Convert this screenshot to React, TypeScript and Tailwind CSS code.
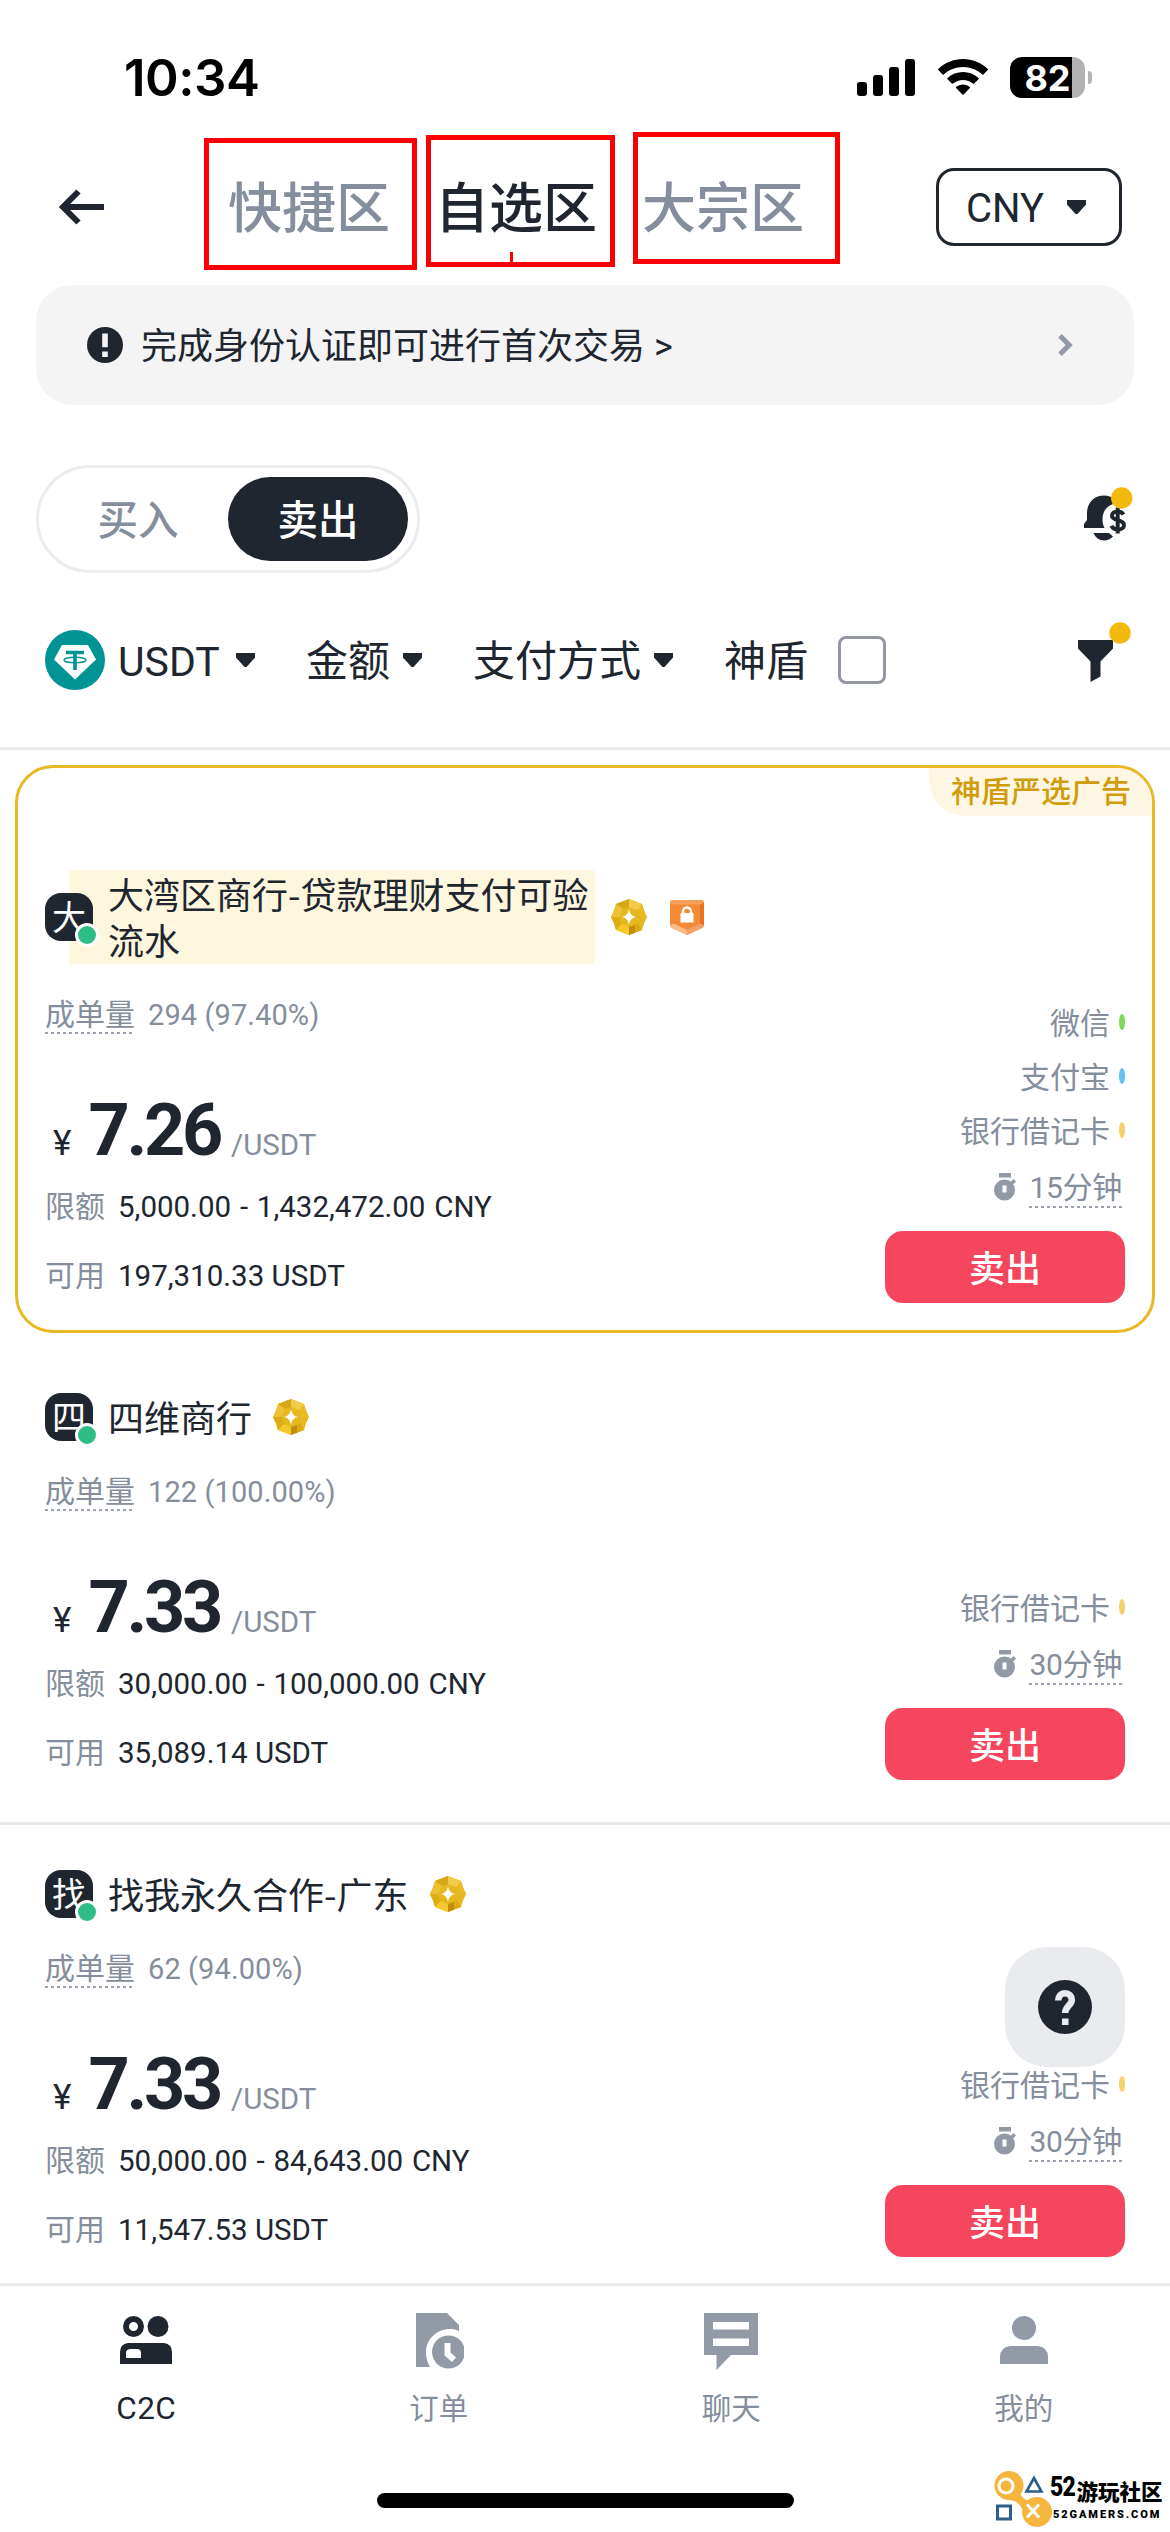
import type { ReactNode } from "react";

type Method = { name: string; color: string };

type Ad = {
  initial: string;
  name: string;
  orders: string;
  price: string;
  limit: string;
  available: string;
  minutes: string;
  methods: Method[];
  shield?: boolean;
};

const WECHAT: Method = { name: "微信", color: "bg-[#7ed957]" };
const ALIPAY: Method = { name: "支付宝", color: "bg-[#63c3f2]" };
const BANK: Method = { name: "银行借记卡", color: "bg-[#f5d16e]" };

const ads: Ad[] = [
  {
    initial: "大",
    name: "大湾区商行-贷款理财支付可验流水",
    orders: "294 (97.40%)",
    price: "7.26",
    limit: "5,000.00 - 1,432,472.00 CNY",
    available: "197,310.33 USDT",
    minutes: "15分钟",
    methods: [WECHAT, ALIPAY, BANK],
    shield: true,
  },
  {
    initial: "四",
    name: "四维商行",
    orders: "122 (100.00%)",
    price: "7.33",
    limit: "30,000.00 - 100,000.00 CNY",
    available: "35,089.14 USDT",
    minutes: "30分钟",
    methods: [BANK],
  },
  {
    initial: "找",
    name: "找我永久合作-广东",
    orders: "62 (94.00%)",
    price: "7.33",
    limit: "50,000.00 - 84,643.00 CNY",
    available: "11,547.53 USDT",
    minutes: "30分钟",
    methods: [BANK],
  },
];

function Caret({ className = "" }: { className?: string }) {
  return (
    <svg viewBox="0 0 19 14" className={`h-[14px] w-[19px] shrink-0 ${className}`} fill="#202630">
      <path d="M0 0h19v4.500L10.500 14h-2L0 4.500z" />
    </svg>
  );
}

function StatusBar() {
  return (
    <div className="flex h-[138px] items-start justify-between pl-[124px] pr-[78px]">
      <span className="mt-[47px] font-['Inter'] text-[51px] font-semibold leading-[62px] tracking-[-0.500px] text-black">
        10:34
      </span>
      <div className="mt-[57px] flex h-[41px] items-center">
        <svg viewBox="0 0 58 37" className="h-[37px] w-[58px]">
          <rect x="0" y="23" width="10" height="14" rx="3" />
          <rect x="16" y="16" width="10" height="21" rx="3" />
          <rect x="32" y="8" width="10" height="29" rx="3" />
          <rect x="48" y="0" width="10" height="37" rx="3" />
        </svg>
        <svg viewBox="0 0 50 37" className="ml-[23px] h-[37px] w-[50px]">
          <path d="M25 0C15.500 0 6.700 3.800 0.300 9.900a.8.800 0 0 0 0 1.200l4.300 4.300a.8.800 0 0 0 1.200 0C10.900 10.700 17.600 7.900 25 7.900s14.100 2.800 19.200 7.500a.8.800 0 0 0 1.200 0l4.300-4.300a.8.800 0 0 0 0-1.200C43.300 3.800 34.500 0 25 0z" />
          <path d="M25 13c-6 0-11.400 2.300-15.500 6a.9.900 0 0 0 0 1.300l4.300 4.300a.9.900 0 0 0 1.200 0c2.700-2.300 6.200-3.700 10-3.700s7.300 1.400 10 3.700a.9.900 0 0 0 1.200 0l4.300-4.300a.9.900 0 0 0 0-1.300C36.400 15.300 31 13 25 13z" />
          <path d="M25 25.500c-2.600 0-5 .9-6.900 2.400a.8.800 0 0 0 0 1.200l6.300 6.400a.8.800 0 0 0 1.200 0l6.300-6.400a.8.800 0 0 0 0-1.200c-1.900-1.500-4.300-2.400-6.900-2.400z" />
        </svg>
        <div className="ml-[22px] flex h-[41px] w-[75px] items-center justify-center rounded-[12px] bg-[linear-gradient(to_right,#000_62px,#b3b3b3_62px)]">
          <span className="font-['Inter'] text-[36px] font-bold leading-[44px] text-white">82</span>
        </div>
        <div className="ml-[3px] h-[13px] w-[4px] rounded-r-full bg-[#b3b3b3]" />
      </div>
    </div>
  );
}

function MarkBox({ className }: { className: string }) {
  return <div className={`absolute border-[5px] border-[#fb0000] ${className}`} />;
}

function Header() {
  return (
    <div className="relative h-[147px]">
      <div className="flex h-[138px] items-center pl-[59px] pr-12">
        <svg viewBox="0 0 45 36" className="h-[36px] w-[45px] shrink-0" fill="none" stroke="#202630" strokeWidth="6">
          <path d="M45 18H4M19.500 2.500L4 18l15.500 15.500" />
        </svg>
        <div className="ml-[124px] flex gap-[45px] pt-[6px] text-[54px] font-medium leading-[66px] text-[#848e9c]">
          <span>快捷区</span>
          <span className="text-[#202630]">自选区</span>
          <span>大宗区</span>
        </div>
        <div className="ml-auto flex h-[78px] w-[186px] items-center rounded-[18px] border-[3px] border-[#202630] pl-[27px]">
          <span className="pt-[3px] text-[40px] leading-[48px]">CNY</span>
          <Caret className="ml-[23px]" />
        </div>
      </div>
      <MarkBox className="left-[204px] top-0 h-[132px] w-[213px]" />
      <MarkBox className="left-[426px] top-[-3px] h-[132px] w-[189px]" />
      <MarkBox className="left-[633px] top-[-6px] h-[132px] w-[207px]" />
      <div className="absolute left-[510px] top-[114px] h-[11px] w-[3px] bg-[#fb0000]" />
    </div>
  );
}

function Banner() {
  return (
    <div className="mx-9 flex h-[120px] items-center rounded-[36px] bg-[#f4f4f4] pl-[51px] pr-[61px]">
      <svg viewBox="0 0 36 36" className="h-9 w-9">
        <circle cx="18" cy="18" r="18" fill="#202630" />
        <path d="M15.200 6.500h5.600v13.800h-5.600zM15.200 24.500h5.600v5.500h-5.600z" fill="#f4f4f4" />
      </svg>
      <span className="ml-[18px] pt-[3px] text-[36px] leading-[48px]">完成身份认证即可进行首次交易 &gt;</span>
      <svg viewBox="0 0 15 22" className="ml-auto h-[22px] w-[15px]" fill="none" stroke="#929aa5" strokeWidth="5">
        <path d="M2 1.800L11.200 11 2 20.200" />
      </svg>
    </div>
  );
}

function TradeToggle() {
  return (
    <div className="mt-[60px] flex h-[108px] items-center justify-between pl-9 pr-[37px]">
      <div className="flex h-[108px] w-[384px] items-center rounded-full border-[3px] border-[#eaecef] p-[9px] text-[40.500px] font-medium leading-[48px]">
        <span className="flex-1 pt-[3px] text-center text-[#848e9c]">买入</span>
        <span className="flex h-[84px] w-[180px] items-center justify-center rounded-full bg-[#202630] pt-[3px] text-white">
          卖出
        </span>
      </div>
      <svg viewBox="0 0 50 54" className="mb-[10px] h-[54px] w-[50px]">
        <path d="M21 8.500C11 8.500 4 16 4 26v7l-3 4v4h20.500c-1.300-2.400-2-5.300-2-8.500 0-7.500 3.500-12.800 9.500-15l3.500-4.500C29.500 10 25.500 8.500 21 8.500z" fill="#202630" />
        <path d="M10.500 46H26l4 3.500c-2.300 2.600-5.500 4-9 4-4.800 0-8.800-3-10.500-7.500z" fill="#202630" />
        <path d="M40.500 27.500c-1.200-2-3.200-3-6-3-3.200 0-5.500 1.700-5.500 4.200 0 6 12 3 12 9.200 0 2.700-2.500 4.600-6 4.600-3.200 0-5.500-1.300-6.500-3.700M34.700 20.500v26" fill="none" stroke="#202630" strokeWidth="4" />
        <circle cx="38.700" cy="11" r="10.700" fill="#f0b90b" />
      </svg>
    </div>
  );
}

function Filters() {
  return (
    <div className="flex h-[177px] items-start border-b-[3px] border-[#eaeaea] pl-[45px] pr-[39px] pt-[49px]">
      <div className="flex h-[76px] w-full items-center text-[42px] leading-[60px]">
        <svg viewBox="0 0 60 60" className="h-[60px] w-[60px] shrink-0">
          <circle cx="30" cy="30" r="30" fill="#009393" />
          <path d="M17 15h26l8 14.500L30 49.500 9 29.500z" fill="#fff" />
          <path d="M21 22.500h18M30 22.500V40" stroke="#009393" strokeWidth="3.600" fill="none" />
          <ellipse cx="30" cy="30" rx="11" ry="2.800" fill="none" stroke="#009393" strokeWidth="1.400" />
        </svg>
        <span className="ml-[13px] w-[101px] pt-1 text-[41px]">USDT</span>
        <Caret className="ml-[17px]" />
        <span className="ml-[51px] pt-1">金额</span>
        <Caret className="ml-[13px]" />
        <span className="ml-[51px] pt-1">支付方式</span>
        <Caret className="ml-[13px]" />
        <span className="ml-[51px] pt-1">神盾</span>
        <span className="ml-[30px] h-12 w-12 rounded-[8px] border-[3px] border-[#9397a2]" />
        <svg viewBox="0 0 54 60" className="ml-auto mb-[16px] h-[60px] w-[54px] shrink-0">
          <path d="M1 18h35v8.500L23.500 39.500v15L13.500 60V39.500L1 26.500z" fill="#202630" />
          <circle cx="43" cy="11" r="10.700" fill="#f0b90b" />
        </svg>
      </div>
    </div>
  );
}

function GoldBadge() {
  return (
    <svg viewBox="0 0 36 36" className="h-9 w-9 shrink-0">
      <path d="M18 0l6.500 2.500L31 5l2 6.500 3 6.500-3 6.500-2 6.500-6.500 2.500L18 36l-6.500-2.500L5 31l-2-6.500L0 18l3-6.500L5 5l6.500-2.500z" fill="#e6b820" />
      <path d="M5 5l6.500-2.500L18 0v8l-6 2z" fill="#d6a716" />
      <path d="M18 0l6.500 2.500L23 10l-5-2zM24.500 2.500L31 5l-4 6-4-1z" fill="#f2cc48" />
      <path d="M0 18l3-6.500L5 5l7 5-4 8z" fill="#ecc132" />
      <path d="M31 5l2 6.500 3 6.500h-7l-2-7z" fill="#e9bb22" />
      <path d="M5 31l-2-6.500L0 18h8l3 7z" fill="#ddad14" />
      <path d="M18 36l-6.500-2.500L5 31l6-6 7 3z" fill="#f5c92c" />
      <path d="M18 36v-8l6-2 .5 7.500z" fill="#c38f08" />
      <path d="M31 31l-6.500 2.500L24 26l3-2z" fill="#dca913" />
      <path d="M18 10c.8 5 3 7.300 7.500 8-4.500.7-6.700 3-7.500 8-.8-5-3-7.300-7.500-8 4.500-.7 6.700-3 7.500-8z" fill="#fff" />
    </svg>
  );
}

function ShieldBadge() {
  return (
    <svg viewBox="0 0 34 36" className="h-9 w-[34px] shrink-0">
      <path d="M3 1h28q3 0 3 3v22q0 2-2 3l-15 7-15-7q-2-1-2-3V4q0-3 3-3z" fill="#f58a36" />
      <path d="M3 1h28q3 0 3 3l-4 1.500H4L0 4q0-3 3-3z" fill="#f4a05a" />
      <path d="M0 26l4-1.500L17 31v5L2 29q-2-1-2-3z" fill="#fbb888" />
      <path d="M34 26l-4-1.500L17 31v5l15-7q2-1 2-3z" fill="#f3a068" />
      <path d="M34 4l-4 1.500v19l4 1.500z" fill="#e8731c" />
      <rect x="10.500" y="14" width="13" height="9.500" fill="#fff" />
      <path d="M13 14.500v-2a4 4 0 0 1 8 0v2" fill="none" stroke="#fff" strokeWidth="2.400" />
    </svg>
  );
}

function Stopwatch() {
  return (
    <svg viewBox="0 0 22 28" className="h-7 w-[22px] shrink-0" fill="#929aa5">
      <path d="M5 0h12v4.500H5zM16.500 9l3-3L22 8.500l-3 3z" />
      <path fillRule="evenodd" d="M10.500 6.500a10.500 10.500 0 1 1 0 21 10.500 10.500 0 0 1 0-21zM8.500 12.500v7h4v-7z" />
    </svg>
  );
}

function Dotted({ className = "" }: { className?: string }) {
  return (
    <span
      className={`h-[2px] bg-[repeating-linear-gradient(to_right,#9aa2ad_0_3px,transparent_3px_6px)] ${className}`}
    />
  );
}

function Row({ label, children }: { label: string; children: ReactNode }) {
  return (
    <div className="flex h-10 items-center text-[30px] leading-10">
      <span className="text-[#848e9c]">{label}</span>
      <span className="ml-[13px] text-[29.500px]">{children}</span>
    </div>
  );
}

function Details({ ad }: { ad: Ad }) {
  return (
    <div className="mt-[30px] flex h-[309px] justify-between">
      <div className="flex flex-col">
        <div className="flex h-10 text-[30px] leading-[42px] text-[#848e9c]">
          <span className="flex h-10 flex-col">
            <span className="h-[38px]">成单量</span>
            <Dotted />
          </span>
          <span className="ml-[13px] text-[29px] tracking-[0.100px]">{ad.orders}</span>
        </div>
        <div className="mt-[61px] flex h-[72px] items-baseline leading-[72px]">
          <span className="ml-[8px] text-[35px]">¥</span>
          <span className="ml-[17px] text-[72px] font-bold tracking-[-3.300px]">{ad.price}</span>
          <span className="ml-[11px] text-[29.500px] text-[#848e9c]">/USDT</span>
        </div>
        <div className="mt-[20px] flex flex-col gap-[29px]">
          <Row label="限额">
            <span className="[word-spacing:1.500px]">{ad.limit}</span>
          </Row>
          <Row label="可用">{ad.available}</Row>
        </div>
      </div>
      <div className="flex w-[240px] shrink-0 flex-col items-end justify-end text-[30px] text-[#848e9c]">
        {ad.methods.map((m) => (
          <div key={m.name} className="flex h-[54px] items-center gap-[9px]">
            <span className="pt-[3px] leading-[40px]">{m.name}</span>
            <span className={`h-[16px] w-[6px] rounded-[50%] ${m.color}`} />
          </div>
        ))}
        <div className="mr-[3px] mt-[9px] flex h-[42px] items-center">
          <Stopwatch />
          <span className="ml-[13px] flex flex-col">
            <span className="h-10 leading-[43px] tracking-[-0.300px]">{ad.minutes}</span>
            <Dotted />
          </span>
        </div>
        <button className="mt-[23px] flex h-[72px] w-full items-center justify-center rounded-[18px] bg-[#f6465d] pt-[5px] text-[36px] font-medium leading-[54px] text-white">
          卖出
        </button>
      </div>
    </div>
  );
}

function Avatar({ initial }: { initial: string }) {
  return (
    <div className="relative z-10 h-12 w-12 shrink-0">
      <div className="flex h-12 w-12 items-center justify-center rounded-[16px] bg-[#202630] pt-[2px] text-[34px] leading-[46px] text-white">
        {initial}
      </div>
      <span className="absolute -bottom-[6px] -right-[6px] h-6 w-6 rounded-full border-[3px] border-white bg-[#2ebd85]" />
    </div>
  );
}

function FeaturedAd({ ad }: { ad: Ad }) {
  return (
    <section className="relative mx-[15px] mt-[15px] overflow-hidden rounded-[38px] border-[3px] border-[#e9b824] px-[27px] pb-[27px] pt-[102px]">
      <div className="absolute right-0 top-0 flex h-12 items-center rounded-bl-[36px] bg-[#fdf6e3] pl-[22px] pr-[21px] text-[30px] font-medium leading-10 text-[#d09c0c]">
        神盾严选广告
      </div>
      <div className="flex h-[94px] items-center">
        <Avatar initial={ad.initial} />
        <div className="-ml-6 flex h-[94px] w-[526px] items-center rounded-r-[4px] bg-[#fef6dd] pb-[2px] pl-[39px] font-['Noto_Sans_CJK_SC',sans-serif] text-[36px] leading-[46px]">
          {ad.name}
        </div>
        <span className="ml-[16px] flex gap-[23px]">
          <GoldBadge />
          {ad.shield && <ShieldBadge />}
        </span>
      </div>
      <Details ad={ad} />
    </section>
  );
}

function PlainAd({ ad, last }: { ad: Ad; last: boolean }) {
  return (
    <section className={`h-[477px] px-[45px] pt-[45px] ${last ? "" : "border-b-[3px] border-[#e8e8e8]"}`}>
      <div className="flex h-12 items-center">
        <Avatar initial={ad.initial} />
        <span className="ml-[15px] pb-[2px] font-['Noto_Sans_CJK_SC',sans-serif] text-[36px] leading-[46px]">
          {ad.name}
        </span>
        <span className="ml-[21px]">
          <GoldBadge />
        </span>
      </div>
      <Details ad={ad} />
    </section>
  );
}

function HelpButton() {
  return (
    <div className="absolute left-[1005px] top-[1947px] flex h-[120px] w-[120px] items-center justify-center rounded-[42px] bg-[#e9ebee]">
      <svg viewBox="0 0 54 54" className="h-[54px] w-[54px]">
        <circle cx="27" cy="27" r="27" fill="#202630" />
        <path d="M20.200 20.500c0-4.500 2.800-7.300 6.800-7.300s6.800 2.800 6.800 6.800c0 5-6.600 6.500-6.600 13" fill="none" stroke="#e9ebee" strokeWidth="6.600" />
        <path d="M24 38.500h6.500V45H24z" fill="#e9ebee" />
      </svg>
    </div>
  );
}

function Tab({ label, active, children }: { label: string; active?: boolean; children: ReactNode }) {
  return (
    <div className={`flex flex-1 flex-col items-center ${active ? "text-[#202630]" : "text-[#848e9c]"}`}>
      {children}
      <span className={`mt-[18px] leading-10 ${active ? "text-[31.500px] tracking-[0.500px]" : "text-[29.500px]"}`}>
        {label}
      </span>
    </div>
  );
}

function TabBar() {
  return (
    <nav className="absolute inset-x-0 bottom-0 flex h-[249px] border-t-[3px] border-[#eaeaea] bg-white pt-[27px]">
      <Tab label="C2C" active>
        <svg viewBox="0 0 54 58" className="h-[58px] w-[54px]" fill="#202630">
          <path fillRule="evenodd" d="M14.500 3a10.500 10.500 0 1 1 0 21 10.500 10.500 0 0 1 0-21zm0 6a4.500 4.500 0 1 0 0 9 4.500 4.500 0 0 0 0-9z" />
          <circle cx="39" cy="13.500" r="10.500" />
          <path fillRule="evenodd" d="M9 30h36q8 1 8 9v12H1V39q0-8 8-9zm2 6q-4 .5-4 4v5h15v-5q0-4-4-4z" />
        </svg>
      </Tab>
      <Tab label="订单">
        <svg viewBox="0 0 50 58" className="h-[58px] w-[50px]" fill="#929aa5">
          <path d="M2 0h31l12 12v6c-3-1.500-6-2-9-2C23 16 12 26 12 39c0 6 1.500 11 4 15H2z" />
          <circle cx="34.500" cy="39" r="16.500" />
          <path d="M30.500 30h6v9.500l5.500 5-4 4.500-7.500-6.500z" fill="#fff" />
        </svg>
      </Tab>
      <Tab label="聊天">
        <svg viewBox="0 0 54 58" className="h-[58px] w-[54px]">
          <path d="M0 0h54v42H27L12.500 57V42H0z" fill="#929aa5" />
          <path d="M9 9h36v7.500H9zM9 25.500h36V33H9z" fill="#fff" />
        </svg>
      </Tab>
      <Tab label="我的">
        <svg viewBox="0 0 50 58" className="h-[58px] w-[50px]" fill="#929aa5">
          <circle cx="25" cy="15" r="12" />
          <path d="M12 33h26q11 1 11 11v7H1v-7q0-10 11-11z" />
        </svg>
      </Tab>
      <div className="absolute bottom-6 left-[377px] h-[15px] w-[417px] rounded-full bg-black" />
      <Watermark />
    </nav>
  );
}

function Watermark() {
  return (
    <div className="absolute bottom-[4px] right-[7px] flex h-[58px] w-[169px] text-black">
      <svg viewBox="0 0 60 58" className="h-[58px] w-[60px] shrink-0">
        <path d="M24 20q4 10 12 11l-6 12q-4-12-14-13z" fill="#f5b53f" />
        <circle cx="15" cy="15.500" r="14.500" fill="#f5b53f" />
        <circle cx="43" cy="42" r="15" fill="#f5b53f" />
        <circle cx="12" cy="16" r="7" fill="none" stroke="#fff" strokeWidth="3" />
        <path d="M32.500 21.500L40 8l7.500 13.500z" fill="none" stroke="#2c5f8a" strokeWidth="2.600" />
        <rect x="3.500" y="36" width="13" height="13" fill="none" stroke="#2c5f8a" strokeWidth="3" />
        <path d="M33 34.500l12 13M45 34.500l-12 13" stroke="#fff" strokeWidth="3" />
      </svg>
      <div className="-ml-[4px] flex flex-col">
        <div className="flex h-[36px] items-end">
          <span className="origin-left scale-x-[0.82] text-[28px] font-black leading-[38px] tracking-[-1px]">52</span>
          <span className="-ml-[4px] text-[21.500px] font-black leading-[26px]">游玩社区</span>
        </div>
        <span className="ml-[3px] mt-[2px] whitespace-nowrap text-[11px] font-black leading-[14px] tracking-[1.900px]">52GAMERS.COM</span>
      </div>
    </div>
  );
}

export default function App() {
  const [featured, ...rest] = ads;
  return (
    <div className="relative h-[2532px] w-[1170px] overflow-hidden bg-white font-['Roboto','Noto_Sans_CJK_SC',sans-serif] text-[#202630]">
      <StatusBar />
      <Header />
      <Banner />
      <TradeToggle />
      <Filters />
      <FeaturedAd ad={featured} />
      <div className="mt-[15px]">
        {rest.map((ad, i) => (
          <PlainAd key={ad.initial} ad={ad} last={i === rest.length - 1} />
        ))}
      </div>
      <HelpButton />
      <TabBar />
    </div>
  );
}
